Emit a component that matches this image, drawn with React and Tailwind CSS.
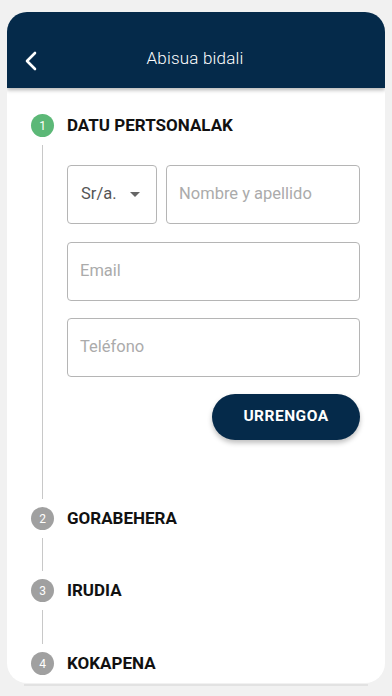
import React from "react";

function Circle({ n, active }) {
  return (
    <div
      className={`w-[23px] h-[23px] rounded-full flex items-center justify-center text-[12px] text-white ${active ? "bg-[#5cb877]" : "bg-[#a0a0a0]"}`}
    >
      {n}
    </div>
  );
}

function Field({ placeholder, className = "" }) {
  return (
    <div className={`h-[59px] border border-[#b5b5b5] rounded-[4px] flex items-center px-[12px] text-[16.5px] text-[#ababab] ${className}`}>
      {placeholder}
    </div>
  );
}

function StepRow({ n, label, active }) {
  return (
    <div className="flex items-center gap-[13px]">
      <Circle n={n} active={active} />
      <div className="text-[17px] leading-[23px] font-bold text-[#111]">{label}</div>
    </div>
  );
}

function Connector({ h }) {
  return (
    <div className="w-[23px] flex justify-center">
      <div className={`w-px bg-[#c8c8c8] ${h}`} />
    </div>
  );
}

export default function App() {
  return (
    <div className="w-[392px] h-[696px] bg-[#f1f1f1] pt-[12px] px-[7px] relative overflow-hidden" style={{ fontFamily: "Roboto, 'Liberation Sans', sans-serif" }}>
      <div className="bg-white rounded-[20px] overflow-hidden h-[671px] relative z-10">
        <div className="h-[76px] bg-[#052a4a] flex items-end pb-[17px] relative shadow-[0_2px_4px_rgba(0,0,0,0.3)]">
          <svg className="absolute left-[17px] top-[39px]" width="14" height="20" viewBox="0 0 14 20" fill="none">
            <path d="M11 2 L3 10 L11 18" stroke="white" strokeWidth="2.6" strokeLinecap="round" strokeLinejoin="round" />
          </svg>
          <div className="w-full text-center text-white text-[17px] font-light tracking-[0.2px] pr-[2px]">Abisua bidali</div>
        </div>
        <div className="pl-[24px] pr-[24px] pt-[26px]">
          <StepRow n="1" label="DATU PERTSONALAK" active />
          <div className="flex gap-[13px]">
            <Connector h="mt-[8px] h-[354px]" />
            <div className="flex-1 pt-[28px] pr-[1px]">
              <div className="flex gap-[9px]">
                <div className="w-[90px] h-[59px] border border-[#b5b5b5] rounded-[4px] flex items-center pl-[13px] text-[16.5px] text-[#555]">
                  <span>Sr/a.</span>
                  <svg className="ml-[13px]" width="10" height="6" viewBox="0 0 10 6"><path d="M0 0 L10 0 L5 5 Z" fill="#666" /></svg>
                </div>
                <Field placeholder="Nombre y apellido" className="flex-1" />
              </div>
              <Field placeholder="Email" className="mt-[18px]" />
              <Field placeholder="Teléfono" className="mt-[17px]" />
              <div className="flex justify-end mt-[17px]">
                <button className="w-[148px] h-[46px] rounded-full bg-[#052a4a] text-white text-[15.5px] font-bold tracking-[0.5px] shadow-[0_3px_5px_rgba(0,0,0,0.25)]">
                  URRENGOA
                </button>
              </div>
            </div>
          </div>
          <div className="mt-[8px]">
            <StepRow n="2" label="GORABEHERA" />
          </div>
          <div className="flex">
            <Connector h="my-[8px] h-[33px]" />
          </div>
          <StepRow n="3" label="IRUDIA" />
          <div className="flex">
            <Connector h="my-[8px] h-[34px]" />
          </div>
          <StepRow n="4" label="KOKAPENA" />
        </div>
      </div>
      <div className="absolute left-[24px] right-[24px] top-[684px] h-[2px] bg-[#e2e2e2]" />
    </div>
  );
}
